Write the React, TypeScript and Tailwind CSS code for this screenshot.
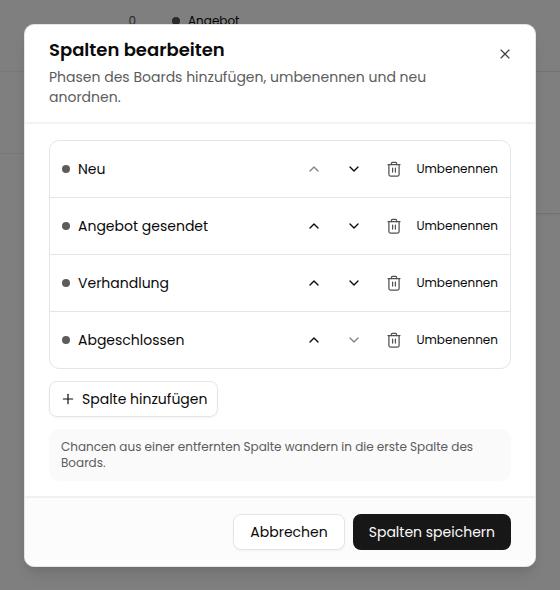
import { ChevronDown, ChevronUp, Plus, X } from "lucide-react";

const COLUMNS = ["Neu", "Angebot gesendet", "Verhandlung", "Abgeschlossen"];

const iconButton =
  "flex size-8 items-center justify-center rounded-md text-[#0a0a0a] disabled:opacity-50";

function TrashIcon() {
  return (
    <svg
      aria-hidden="true"
      viewBox="0 0 16 16"
      className="size-4"
      fill="none"
      stroke="currentColor"
      strokeWidth="1.25"
      strokeLinecap="round"
      strokeLinejoin="round"
    >
      <path d="M2 3.5h12" />
      <path d="M5.4 3.5V2.4a1 1 0 0 1 1-1h3.2a1 1 0 0 1 1 1v1.1" />
      <path d="M2.9 3.5v10a1.5 1.5 0 0 0 1.5 1.5h7.2a1.5 1.5 0 0 0 1.5-1.5v-10" />
      <path d="M6.6 7v4M9.4 7v4" />
    </svg>
  );
}

function Board() {
  return (
    <div aria-hidden="true" className="absolute inset-0 flex bg-white">
      <div className="w-[152px] shrink-0">
        <div className="flex h-[72px] justify-end border-b border-[#f0f0f0] px-4 pt-[13px] text-xs leading-4 text-[#525252]">
          0
        </div>
        <div className="h-[82px] border-b border-[#f0f0f0]" />
      </div>
      <div className="flex-1">
        <div className="flex h-[72px] items-start gap-2 border-b border-[#e5e5e5] px-5 pt-[13px] text-xs leading-4 text-[#0a0a0a]">
          <span className="mt-1 size-2 rounded-full bg-[#525252]" />
          Angebot
        </div>
        <div className="h-[142px] border-b border-[#e5e5e5] shadow-xs" />
      </div>
    </div>
  );
}

function ColumnRow({ name, first, last }: { name: string; first: boolean; last: boolean }) {
  return (
    <li className="box-content flex h-14 items-center gap-2">
      <span className="ml-3 size-2 shrink-0 rounded-full bg-[#5c5c5c]" />
      <span className="min-w-0 flex-1 truncate text-sm">{name}</span>
      <div className="flex items-center gap-2">
        <button type="button" aria-label={`${name} nach oben`} disabled={first} className={iconButton}>
          <ChevronUp className="size-4" />
        </button>
        <button type="button" aria-label={`${name} nach unten`} disabled={last} className={iconButton}>
          <ChevronDown className="size-4" />
        </button>
        <button
          type="button"
          aria-label={`${name} löschen`}
          className="flex size-8 items-center justify-center rounded-md text-[#525252]"
        >
          <TrashIcon />
        </button>
      </div>
      <button type="button" className="mr-3 -ml-0.5 h-8 text-xs">
        Umbenennen
      </button>
    </li>
  );
}

export default function App() {
  return (
    <div className="relative min-h-screen font-['Poppins','Noto_Sans',sans-serif] text-[#0a0a0a]">
      <Board />
      <div className="relative flex min-h-screen items-start justify-center bg-black/50 px-6 pt-6 pb-5">
        <div
          role="dialog"
          aria-labelledby="dialog-title"
          aria-describedby="dialog-description"
          className="w-full max-w-lg overflow-hidden rounded-[10px] border border-[#e5e5e5] bg-white shadow-lg"
        >
          <header className="flex items-start justify-between gap-4 border-b-2 border-[#f3f3f3] px-6 pt-4 pb-[15px]">
            <div className="flex max-w-[400px] flex-col gap-2">
              <h2 id="dialog-title" className="text-lg leading-[18px] font-semibold">
                Spalten bearbeiten
              </h2>
              <p id="dialog-description" className="text-sm text-[#5c5c5c]">
                Phasen des Boards hinzufügen, umbenennen und neu anordnen.
              </p>
            </div>
            <button type="button" aria-label="Schließen" className="-mr-0.5 pt-[5px] text-[#404040]">
              <X className="size-4" strokeWidth={1.75} />
            </button>
          </header>

          <div className="flex flex-col items-start gap-3 px-6 pt-4 pb-[15px]">
            <ul className="w-full divide-y divide-[#e5e5e5] rounded-[10px] border border-[#e5e5e5]">
              {COLUMNS.map((name, i) => (
                <ColumnRow
                  key={name}
                  name={name}
                  first={i === 0}
                  last={i === COLUMNS.length - 1}
                />
              ))}
            </ul>
            <button
              type="button"
              className="flex h-9 items-center gap-1.5 rounded-lg border border-[#e5e5e5] px-2.5 text-sm shadow-xs"
            >
              <Plus className="size-4" strokeWidth={1.75} />
              Spalte hinzufügen
            </button>
            <p className="w-full rounded-[10px] bg-[#fafafa] px-3 py-2.5 text-xs text-[#5c5c5c]">
              Chancen aus einer entfernten Spalte wandern in die erste Spalte des Boards.
            </p>
          </div>

          <footer className="flex justify-end gap-2 border-t-2 border-[#f0f0f0] bg-[#fcfcfc] px-6 py-4">
            <button
              type="button"
              className="h-9 rounded-lg border border-[#e5e5e5] bg-white px-4 text-sm shadow-xs"
            >
              Abbrechen
            </button>
            <button type="button" className="h-9 rounded-lg bg-[#171717] px-4 text-sm text-[#fafafa]">
              Spalten speichern
            </button>
          </footer>
        </div>
      </div>
    </div>
  );
}
